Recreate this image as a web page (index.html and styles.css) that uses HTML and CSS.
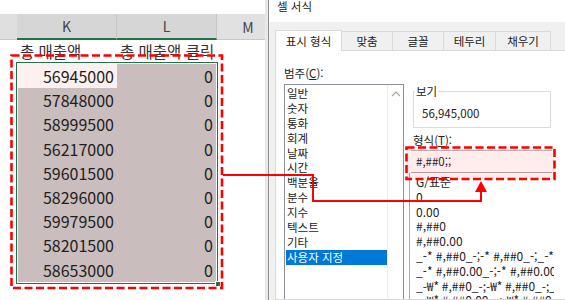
FILE: index.html
```html
<!DOCTYPE html>
<html lang="ko">
<head>
<meta charset="utf-8">
<title>셀 서식</title>
<link rel="stylesheet" href="styles.css">
</head>
<body>
<div class="screen">
  <section class="sheet">
    <div class="colheads">
      <div class="corner"></div>
      <div class="ch sel">K</div>
      <div class="ch sel">L</div>
      <div class="ch m">M</div>
    </div>
    <div class="titles">
      <div class="tcell">총 매출액</div>
      <div class="tcell">총 매출액 클릭</div>
    </div>
    <div class="selection">
      <div class="srow"><div class="c active">56945000</div><div class="c">0</div></div>
      <div class="srow"><div class="c">57848000</div><div class="c">0</div></div>
      <div class="srow"><div class="c">58999500</div><div class="c">0</div></div>
      <div class="srow"><div class="c">56217000</div><div class="c">0</div></div>
      <div class="srow"><div class="c">59601500</div><div class="c">0</div></div>
      <div class="srow"><div class="c">58296000</div><div class="c">0</div></div>
      <div class="srow"><div class="c">59979500</div><div class="c">0</div></div>
      <div class="srow"><div class="c">58201500</div><div class="c">0</div></div>
      <div class="srow"><div class="c">58653000</div><div class="c">0</div></div>
      <span class="handle"></span>
    </div>
  </section>

  <section class="dialog">
    <div class="titlebar">셀 서식</div>
    <div class="dbody">
      <div class="tabs">
        <div class="tab active w1">표시 형식</div>
        <div class="tab w2">맞춤</div>
        <div class="tab w3">글꼴</div>
        <div class="tab w4">테두리</div>
        <div class="tab w5">채우기</div>
      </div>
      <div class="panel">
        <div class="leftcol">
          <div class="label">범주(<u>C</u>):</div>
          <div class="listbox">
            <div class="items">
              <div class="item">일반</div>
              <div class="item">숫자</div>
              <div class="item">통화</div>
              <div class="item">회계</div>
              <div class="item">날짜</div>
              <div class="item">시간</div>
              <div class="item">백분율</div>
              <div class="item">분수</div>
              <div class="item">지수</div>
              <div class="item">텍스트</div>
              <div class="item">기타</div>
              <div class="item selected">사용자 지정</div>
            </div>
            <div class="scrollbar">
              <svg class="chev" width="10" height="6" viewBox="0 0 10 6"><polyline points="1,5 5,1 9,5" fill="none" stroke="#a6a6a6" stroke-width="1.2"/></svg>
            </div>
          </div>
        </div>
        <div class="rightcol">
          <div class="group">
            <span class="legend">보기</span>
            <div class="preview">56,945,000</div>
          </div>
          <div class="label fmtlabel">형식(<u>T</u>):</div>
          <div class="input">#,##0;;</div>
          <div class="fmtlist">
            <div class="fitem">G/표준</div>
            <div class="fitem">0</div>
            <div class="fitem">0.00</div>
            <div class="fitem">#,##0</div>
            <div class="fitem">#,##0.00</div>
            <div class="fitem">_-* #,##0_-;-* #,##0_-;_-* "-"_-;_-@_-</div>
            <div class="fitem">_-* #,##0.00_-;-* #,##0.00_-;_-* "-"??_-;_-@_-</div>
            <div class="fitem">_-₩* #,##0_-;-₩* #,##0_-;_-₩* "-"_-;_-@_-</div>
            <div class="fitem">_-₩* #,##0.00_-;-₩* #,##0.00_-;_-₩* "-"??_-;_-@_-</div>
          </div>
        </div>
      </div>
    </div>
  </section>

  <svg class="annot" width="565" height="300" viewBox="0 0 565 300">
    <rect x="11.5" y="55.5" width="210.5" height="232.5" fill="none" stroke="#ff0000" stroke-width="2.6" stroke-dasharray="8 3.5"/>
    <rect x="406.5" y="147.5" width="148" height="31.5" fill="rgba(255,0,0,0.07)" stroke="#ff0000" stroke-width="2.6" stroke-dasharray="8 3.5"/>
    <polyline points="223,175 313,175 313,201 481,201 481,191" fill="none" stroke="#ff0000" stroke-width="2"/>
    <polygon points="481,181 475,192 487,192" fill="#ff0000"/>
  </svg>
</div>
</body>
</html>
```

FILE: styles.css
```css
* { box-sizing: border-box; margin: 0; padding: 0; }

html, body {
  width: 565px;
  height: 300px;
  overflow: hidden;
  background: #ffffff;
}

body {
  font-family: "Noto Sans CJK KR", "Noto Sans", sans-serif;
  color: #222222;
}

.screen {
  position: relative;
  display: flex;
  width: 565px;
  height: 300px;
  overflow: hidden;
}

/* ---------- spreadsheet ---------- */
.sheet {
  width: 268px;
  flex: none;
  padding-top: 14px;
  border-right: 3px solid #e8e8e8;
}

.colheads {
  display: flex;
  height: 26px;
}

.corner {
  width: 17px;
  background: #dfdfdf;
  border-bottom: 1px solid #c8c8c8;
}

.ch {
  display: flex;
  align-items: center;
  justify-content: center;
  font-size: 14px;
  color: #444444;
  background: #e1e1e1;
  border-right: 1px solid #c6c6c6;
  border-bottom: 1px solid #c8c8c8;
}

.ch.sel {
  width: 100px;
  background: #d6d6d6;
  border-bottom: 2px solid #217346;
}

.ch.m {
  width: 48px;
  padding-left: 14px;
  border-right: none;
}

.titles {
  display: flex;
  height: 22px;
  padding-left: 17px;
}

.tcell {
  width: 100px;
  padding-left: 3px;
  font-size: 15.5px;
  line-height: 22px;
  color: #333333;
  white-space: nowrap;
}

.selection {
  position: relative;
  width: 202px;
  margin-left: 16px;
  border: 1px solid #217346;
  padding: 1px;
  background: #ffffff;
}

.srow {
  display: flex;
  height: 24.2px;
}

.c {
  width: 99px;
  background: #c9bdbd;
  font-size: 16px;
  line-height: 24.2px;
  text-align: right;
  padding-right: 3px;
  color: #1e1e1e;
}

.c.active {
  background: #fdf0f0;
}

.handle {
  position: absolute;
  right: -4px;
  bottom: -4px;
  width: 6px;
  height: 6px;
  background: #217346;
  border: 1px solid #ffffff;
}

/* ---------- dialog ---------- */
.dialog {
  flex: 1;
  min-width: 0;
  display: flex;
  flex-direction: column;
  border-left: 1px solid #8f8f8f;
  overflow: hidden;
}

.titlebar {
  flex: none;
  height: 22px;
  background: #ffffff;
  padding-left: 8px;
  font-size: 11.5px;
  line-height: 12px;
  color: #222222;
}

.dbody {
  flex: 1;
  min-height: 0;
  display: flex;
  flex-direction: column;
  background: #f0f0f0;
  padding: 8px 0 0 6px;
}

.tabs {
  flex: none;
  display: flex;
  align-items: flex-end;
  height: 20px;
  padding-left: 1px;
}

.tab {
  height: 19px;
  display: flex;
  align-items: center;
  justify-content: center;
  font-size: 11.5px;
  color: #222222;
  background: #f0f0f0;
  border: 1px solid #d9d9d9;
  border-bottom: none;
  margin-left: -1px;
}

.tab.active {
  position: relative;
  z-index: 1;
  height: 21px;
  margin-bottom: -1px;
  background: #ffffff;
}

.w1 { width: 67px; }
.w2 { width: 52px; }
.w3 { width: 52px; }
.w4 { width: 53px; }
.w5 { width: 56px; }

.panel {
  flex: 1;
  min-height: 0;
  overflow: hidden;
  display: flex;
  background: #ffffff;
  border: 1px solid #d9d9d9;
  border-right: none;
  padding-left: 8px;
}

.label {
  font-size: 11.5px;
  line-height: 16px;
  height: 16px;
  color: #222222;
  white-space: nowrap;
}

.leftcol {
  width: 120px;
  flex: none;
  padding-top: 14px;
  margin-right: 9px;
  display: flex;
  flex-direction: column;
}

.listbox {
  margin-top: 3px;
  flex: 1;
  display: flex;
  border: 1px solid #8a8f99;
  border-bottom: none;
}

.items {
  flex: 1;
  padding: 1px 0 0 1px;
}

.item {
  height: 14.9px;
  line-height: 14.9px;
  font-size: 11.5px;
  padding-left: 1px;
  color: #222222;
  white-space: nowrap;
}

.item.selected {
  background: #0078d7;
  color: #ffffff;
}

.scrollbar {
  width: 16px;
  flex: none;
  border-left: 1px solid #ececec;
  display: flex;
  justify-content: center;
  padding-top: 6px;
}

.chev { display: block; }

.rightcol {
  width: 143px;
  flex: none;
  padding-top: 40px;
  display: flex;
  flex-direction: column;
}

.group {
  flex: none;
  height: 37px;
  width: 138px;
  border: 1px solid #dcdcdc;
  padding-left: 8px;
}

.legend {
  display: block;
  width: max-content;
  margin: -8px 0 0 -7px;
  padding: 0 1px;
  background: #ffffff;
  font-size: 11.5px;
  line-height: 14px;
  color: #222222;
}

.preview {
  margin-top: 8px;
  font-size: 11.5px;
  line-height: 14px;
  color: #222222;
}

.fmtlabel {
  flex: none;
  margin-top: 4px;
}

.input {
  flex: none;
  margin-top: 2px;
  margin-left: -2px;
  width: 141px;
  height: 23px;
  border-top: 1px solid #b9b9b9;
  border-bottom: 1px solid #a9a9a9;
  padding-left: 5px;
  font-size: 11.5px;
  line-height: 21px;
  color: #222222;
}

.fmtlist {
  margin-left: -4px;
  width: 145px;
  flex: 1;
  min-height: 0;
  overflow: hidden;
  border-left: 1px solid #a8a8a8;
  padding: 2px 0 0 6px;
}

.fitem {
  height: 14.8px;
  line-height: 14.8px;
  font-size: 12px;
  color: #222222;
  white-space: nowrap;
}

/* ---------- annotations ---------- */
.annot {
  position: absolute;
  left: 0;
  top: 0;
  pointer-events: none;
}
```
